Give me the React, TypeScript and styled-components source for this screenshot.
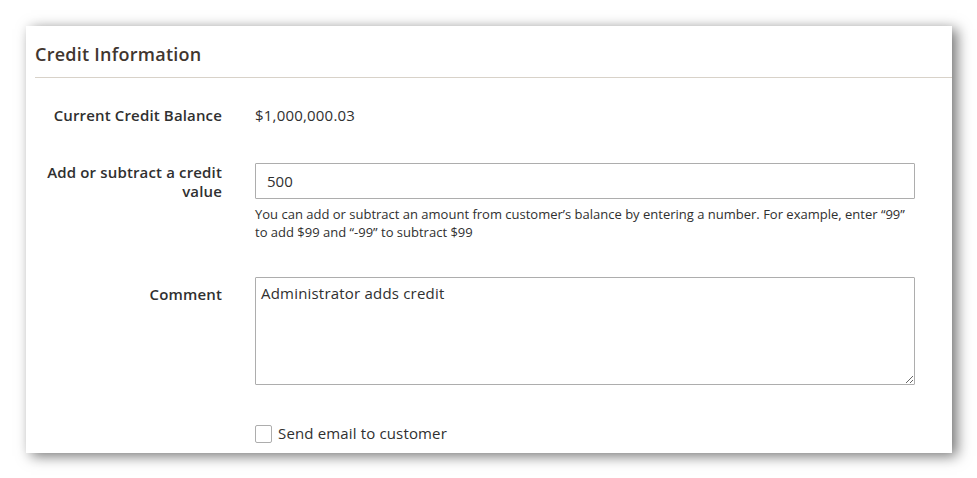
import styled, { createGlobalStyle } from "styled-components";

const GlobalStyle = createGlobalStyle`
  html, body {
    margin: 0;
    padding: 0;
    background: #ffffff;
  }
  body {
    font-family: "Open Sans", "Liberation Sans", sans-serif;
    color: #303030;
  }
`;

export default function App() {
  return (
    <>
      <GlobalStyle />
      <Page>
        <Card>
          <Header>
            <Title>Credit Information</Title>
          </Header>
          <Fields>
            <FieldRow $gap={28}>
              <Label>Current Credit Balance</Label>
              <Value>$1,000,000.03</Value>
            </FieldRow>
            <FieldRow $gap={38}>
              <Label>Add or subtract a credit value</Label>
              <Control>
                <TextInput type="text" defaultValue="500" />
                <Note>
                  You can add or subtract an amount from customer’s balance by
                  entering a number. For example, enter “99” to add $99 and
                  “-99” to subtract $99
                </Note>
              </Control>
            </FieldRow>
            <FieldRow $gap={36}>
              <Label $pad={8}>Comment</Label>
              <Control>
                <TextArea defaultValue="Administrator adds credit" />
              </Control>
            </FieldRow>
            <FieldRow $gap={39}>
              <span />
              <CheckLine>
                <CheckBox type="checkbox" />
                <CheckText>Send email to customer</CheckText>
              </CheckLine>
            </FieldRow>
          </Fields>
        </Card>
      </Page>
    </>
  );
}

const Page = styled.div`
  padding: 26px 0 0 26px;
  height: 478px;
  box-sizing: border-box;
  overflow: hidden;
`;

const Card = styled.section`
  width: 926px;
  height: 427px;
  background: #ffffff;
  box-shadow: 5px 3px 13px rgba(0, 0, 0, 0.55);
  overflow: hidden;
`;

const Header = styled.div`
  margin-left: 9px;
  padding: 17px 0 12px;
  border-bottom: 1px solid #d8d2c9;
`;

const Title = styled.h2`
  margin: 0;
  font-size: 18px;
  line-height: 22px;
  font-weight: 600;
  letter-spacing: 0.25px;
  color: #41362f;
`;

const Fields = styled.div`
  display: flex;
  flex-direction: column;
`;

const FieldRow = styled.div<{ $gap: number }>`
  display: grid;
  grid-template-columns: 196px 660px;
  column-gap: 33px;
  align-items: start;
  margin-top: ${(p) => p.$gap}px;
`;

const Label = styled.label<{ $pad?: number }>`
  text-align: right;
  font-size: 15px;
  line-height: 19px;
  font-weight: 600;
  letter-spacing: 0.15px;
  color: #303030;
  padding-top: ${(p) => p.$pad ?? 0}px;
`;

const Value = styled.div`
  font-size: 15px;
  line-height: 19px;
  letter-spacing: 0.2px;
  color: #303030;
`;

const Control = styled.div`
  display: flex;
  flex-direction: column;
`;

const TextInput = styled.input`
  box-sizing: border-box;
  width: 660px;
  height: 36px;
  margin: 0;
  padding: 0 11px;
  border: 1px solid #adadad;
  border-radius: 1px;
  font-family: "Open Sans", "Liberation Sans", sans-serif;
  font-size: 15px;
  color: #303030;
  outline: none;
`;

const Note = styled.p`
  margin: 6px 0 0;
  font-size: 13px;
  line-height: 18px;
  color: #303030;
  max-width: 660px;
`;

const TextArea = styled.textarea`
  box-sizing: border-box;
  width: 660px;
  height: 108px;
  margin: 0;
  padding: 6px 5px;
  border: 1px solid #adadad;
  border-radius: 1px;
  font-family: "Open Sans", "Liberation Sans", sans-serif;
  font-size: 15px;
  line-height: 19px;
  letter-spacing: 0.2px;
  color: #303030;
  resize: vertical;
  outline: none;
`;

const CheckLine = styled.label`
  display: flex;
  align-items: center;
  gap: 6px;
`;

const CheckBox = styled.input`
  appearance: none;
  box-sizing: border-box;
  width: 17px;
  height: 18px;
  margin: 0;
  border: 1px solid #adadad;
  border-radius: 2px;
  background: #ffffff;
`;

const CheckText = styled.span`
  font-size: 15px;
  line-height: 19px;
  letter-spacing: 0.15px;
  color: #303030;
`;
